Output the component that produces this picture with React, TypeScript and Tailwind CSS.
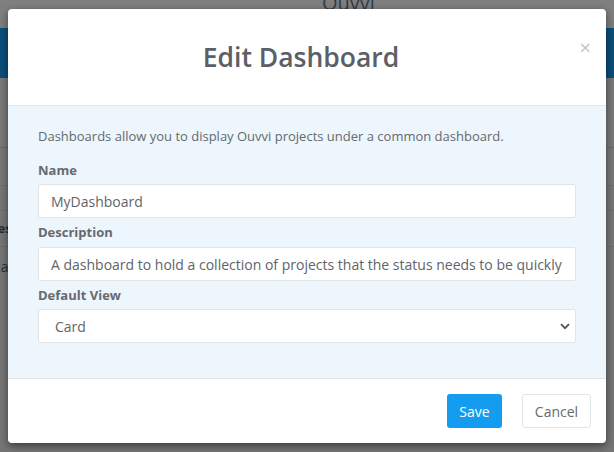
import React from "react";

export default function App() {
  const font = { fontFamily: '"Open Sans", "Noto Sans", Arial, sans-serif' };
  return (
    <div className="relative w-[614px] h-[452px] overflow-hidden bg-[#777777]" style={font}>
      {/* background page (dimmed) */}
      <div className="flex flex-col h-full">
        <div className="h-[28px] bg-[#7f7f7f] relative overflow-hidden">
          <div className="absolute left-[322px] top-[-9px] text-[20px] leading-[24px] text-[#333b44]">Ouvvi</div>
        </div>
        <div className="h-[50px] bg-[#0b4f7b]" />
        <div className="h-[70px] bg-[#7a7a7a] border-b border-[#6d6d6d]" />
        <div className="h-[38px] bg-[#787878] border-b border-[#6f6f6f]" />
        <div className="h-[25px] bg-[#777777] border-b border-[#6f6f6f]" />
        <div className="h-[36px] bg-[#777777] border-b border-[#6f6f6f] flex items-center">
          <span className="ml-[-12px] text-[13px] font-bold text-[#2a2a2a]">Desc</span>
        </div>
        <div className="h-[38px] bg-[#767676] flex items-center">
          <span className="ml-[-6px] text-[14px] text-[#2f2f2f]">ca</span>
        </div>
        <div className="flex-1 bg-[#767676]" />
      </div>

      {/* modal */}
      <div className="absolute left-[8px] top-[9px] w-[598px] h-[434px] bg-white rounded-[4px] shadow-[0_3px_9px_rgba(0,0,0,0.5)] flex flex-col overflow-hidden">
        <div className="relative h-[97px] flex items-center justify-center border-b border-[#e3e6e9]">
          <h1 className="text-[26.5px] font-semibold text-[#5b6067] mr-[12px] mt-[2px]">Edit Dashboard</h1>
          <span className="absolute right-[15px] top-[27px] text-[20px] leading-[24px] text-[#c4c4c4]">×</span>
        </div>
        <div className="flex-1 bg-[#edf5fd] px-[30px] pt-[20px]">
          <p className="text-[13px] leading-[20px] text-[#666a6e]">
            Dashboards allow you to display Ouvvi projects under a common dashboard.
          </p>
          <label className="block mt-[15px] mb-[5px] text-[13px] leading-[18px] font-bold text-[#666a6e]">Name</label>
          <input
            readOnly
            value="MyDashboard"
            className="block w-full h-[34px] bg-white border border-[#e2e5e8] rounded-[2px] px-[12px] text-[14px] text-[#5f6469] outline-none"
          />
          <label className="block mt-[5px] mb-[6px] text-[13px] leading-[18px] font-bold text-[#666a6e]">Description</label>
          <input
            readOnly
            value="A dashboard to hold a collection of projects that the status needs to be quickly viewed"
            className="block w-full h-[34px] bg-white border border-[#e2e5e8] rounded-[2px] px-[12px] text-[14px] text-[#5f6469] outline-none"
          />
          <label className="block mt-[5px] mb-[5px] text-[13px] leading-[18px] font-bold text-[#666a6e]">Default View</label>
          <div className="h-[34px] bg-white border border-[#e2e5e8] rounded-[2px] flex items-center justify-between pl-[16px] pr-[5px] text-[14px] text-[#5f6469]">
            <span>Card</span>
            <svg width="10" height="7" viewBox="0 0 10 7">
              <path d="M1 1.2 L5 5.2 L9 1.2" fill="none" stroke="#555" strokeWidth="1.8" />
            </svg>
          </div>
        </div>
        <div className="h-[65px] border-t border-[#e3e6e9] flex items-center justify-end gap-[20px] pr-[15px]">
          <button className="h-[34px] w-[55px] rounded-[3px] bg-[#149cf0] text-white text-[14px]">Save</button>
          <button className="h-[34px] w-[69px] rounded-[3px] bg-white border border-[#e2e5e8] text-[#666a6e] text-[14px]">Cancel</button>
        </div>
      </div>
    </div>
  );
}
